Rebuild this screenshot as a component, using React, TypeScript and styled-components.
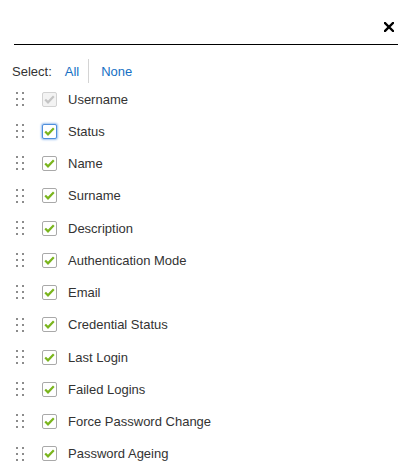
import styled, {createGlobalStyle} from "styled-components";

interface Column {
    label: string;
    disabled?: boolean;
    focused?: boolean;
}

const columns: Column[] = [
    {label: 'Username', disabled: true},
    {label: 'Status', focused: true},
    {label: 'Name'},
    {label: 'Surname'},
    {label: 'Description'},
    {label: 'Authentication Mode'},
    {label: 'Email'},
    {label: 'Credential Status'},
    {label: 'Last Login'},
    {label: 'Failed Logins'},
    {label: 'Force Password Change'},
    {label: 'Password Ageing'},
];

export default function App() {
    return <>
        <GlobalStyle/>
        <Panel>
            <Header>
                <CloseButton aria-label='Close'>
                    <svg width='10' height='10' viewBox='0 0 10 10'>
                        <path d='M1 1 L9 9 M9 1 L1 9' stroke='#000' strokeWidth='2.4' strokeLinecap='square'/>
                    </svg>
                </CloseButton>
            </Header>
            <Toolbar>
                <SelectLabel>Select:</SelectLabel>
                <SelectLink>All</SelectLink>
                <Divider/>
                <SelectLink>None</SelectLink>
            </Toolbar>
            <List>
                {columns.map(c => <Row key={c.label}>
                    <DragHandle>
                        {Array.from({length: 6}).map((_, i) => <Dot key={i}/>)}
                    </DragHandle>
                    <CheckBox $disabled={c.disabled} $focused={c.focused}>
                        <svg width='11' height='9' viewBox='0 0 11 9'>
                            <path d='M1.2 4.4 L4 7.3 L9.8 1.2' fill='none'
                                  stroke={c.disabled ? '#c4c4c4' : '#7ab51d'} strokeWidth='2.2'/>
                        </svg>
                    </CheckBox>
                    <Label>{c.label}</Label>
                </Row>)}
            </List>
        </Panel>
    </>
}

const GlobalStyle = createGlobalStyle`
    body {
        margin: 0;
        background: #fff;
        font-family: "Liberation Sans", Arial, sans-serif;
        font-size: 13px;
        color: #333;
    }
`

const Panel = styled.div`
    padding: 0 13px 0 12px;
`

const Header = styled.div`
    height: 44px;
    margin-left: 2px;
    border-bottom: 1px solid #000;
    display: flex;
    align-items: flex-start;
    justify-content: flex-end;
`

const CloseButton = styled.button`
    margin: 22px 4px 0 0;
    padding: 0;
    border: none;
    background: none;
    width: 10px;
    height: 10px;
    display: flex;
    cursor: pointer;
`

const Toolbar = styled.div`
    margin-top: 14px;
    height: 24px;
    display: flex;
    align-items: center;
`

const SelectLabel = styled.span`
    color: #333;
    margin-right: 13px;
`

const SelectLink = styled.a`
    color: #1670c4;
    cursor: pointer;
`

const Divider = styled.span`
    align-self: stretch;
    width: 1px;
    background: #d4d4d4;
    margin: 0 12px 0 9px;
`

const List = styled.ul`
    list-style: none;
    margin: 0;
    padding: 0;
`

const Row = styled.li`
    height: 32px;
    display: flex;
    align-items: center;

    &:nth-child(4n) {
        height: 33px;
    }
`

const DragHandle = styled.span`
    width: 8px;
    margin-left: 4px;
    display: grid;
    grid-template-columns: 2px 2px;
    grid-auto-rows: 2px;
    column-gap: 4px;
    row-gap: 4px;
    cursor: move;
`

const Dot = styled.span`
    width: 2px;
    height: 2px;
    background: #8c8c8c;
`

const CheckBox = styled.span<{ $disabled?: boolean; $focused?: boolean }>`
    box-sizing: border-box;
    width: 15px;
    height: 15px;
    margin-left: 18px;
    border: 1px solid ${p => p.$focused ? '#4f8fdc' : p.$disabled ? '#d2d2d2' : '#a9a9a9'};
    border-radius: 2px;
    background: ${p => p.$disabled ? '#f3f3f3' : '#fff'};
    box-shadow: ${p => p.$focused ? '0 0 2px 1px #9fc3f0' : 'none'};
    display: flex;
    align-items: center;
    justify-content: center;
`

const Label = styled.span`
    margin-left: 11px;
    color: #333;
`
